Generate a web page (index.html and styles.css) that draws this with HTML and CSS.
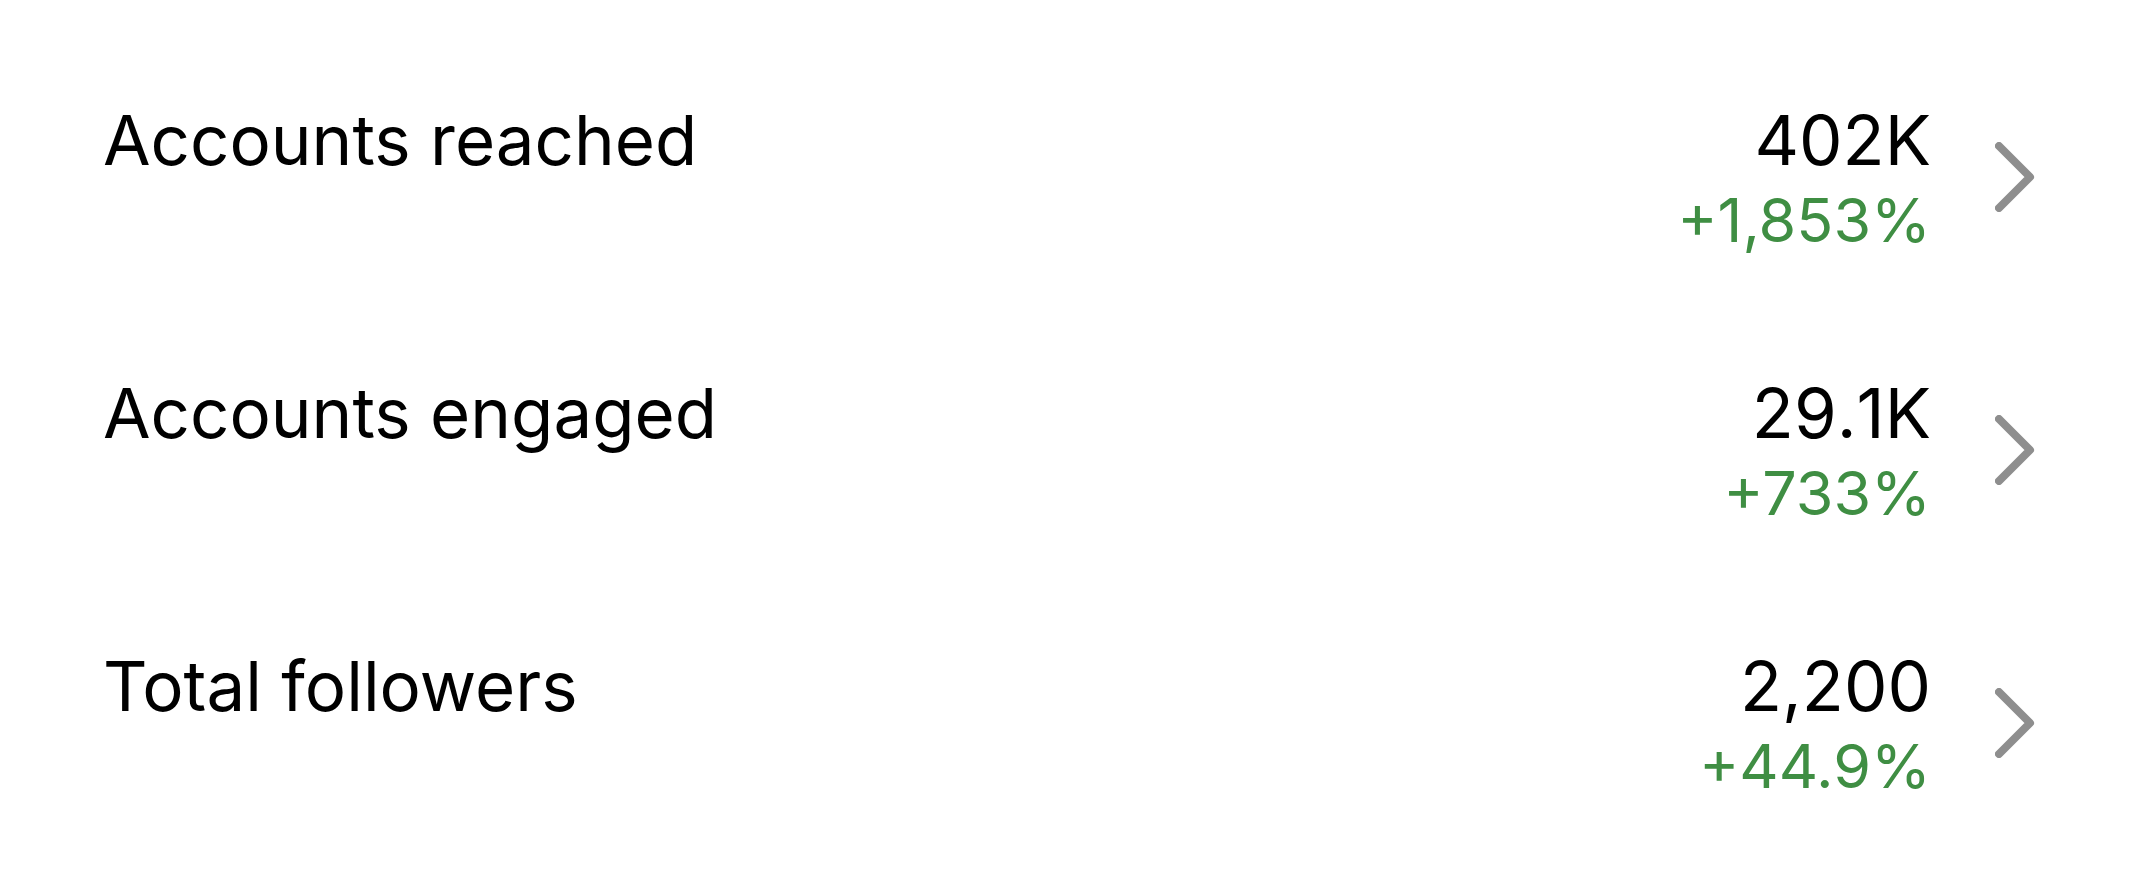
FILE: index.html
```html
<!DOCTYPE html>
<html lang="en">
<head>
<meta charset="utf-8">
<meta name="viewport" content="width=device-width, initial-scale=1">
<title>Account overview</title>
<link rel="stylesheet" href="styles.css">
</head>
<body>
<main class="overview">
  <a class="metric" href="#reached">
    <span class="metric-label">Accounts reached</span>
    <span class="metric-figures"><span class="metric-value">402K</span><span class="metric-change">+1,853%</span></span>
    <svg class="chevron" viewBox="0 0 40 70" aria-hidden="true"><path d="M4 4 L35 35 L4 66"/></svg>
  </a>
  <a class="metric" href="#engaged">
    <span class="metric-label">Accounts engaged</span>
    <span class="metric-figures"><span class="metric-value">29.1K</span><span class="metric-change">+733%</span></span>
    <svg class="chevron" viewBox="0 0 40 70" aria-hidden="true"><path d="M4 4 L35 35 L4 66"/></svg>
  </a>
  <a class="metric" href="#followers">
    <span class="metric-label">Total followers</span>
    <span class="metric-figures"><span class="metric-value">2,200</span><span class="metric-change">+44.9%</span></span>
    <svg class="chevron" viewBox="0 0 40 70" aria-hidden="true"><path d="M4 4 L35 35 L4 66"/></svg>
  </a>
</main>
</body>
</html>
```
FILE: styles.css
```css
body {
  margin: 0;
  background: #fff;
  color: #000;
  font-family: Inter, "Liberation Sans", sans-serif;
}

.overview {
  display: flex;
  flex-direction: column;
  gap: 113px;
  padding: 97px 111px 72px 103px;
}

.metric {
  display: flex;
  align-items: center;
  color: inherit;
  text-decoration: none;
}

.metric-label {
  flex: 1;
  align-self: flex-start;
  font-size: 69px;
  line-height: 86px;
}

.metric-figures {
  display: flex;
  flex-direction: column;
  align-items: flex-end;
  margin-right: 64px;
}

.metric-value {
  font-size: 69px;
  line-height: 86px;
  font-kerning: none;
}

.metric-change {
  color: #3f8e43;
  font-size: 61px;
  line-height: 74px;
}

.chevron {
  width: 40px;
  height: 70px;
  fill: none;
  stroke: #8e8e8e;
  stroke-width: 8;
  stroke-linecap: round;
  stroke-linejoin: round;
}
```
